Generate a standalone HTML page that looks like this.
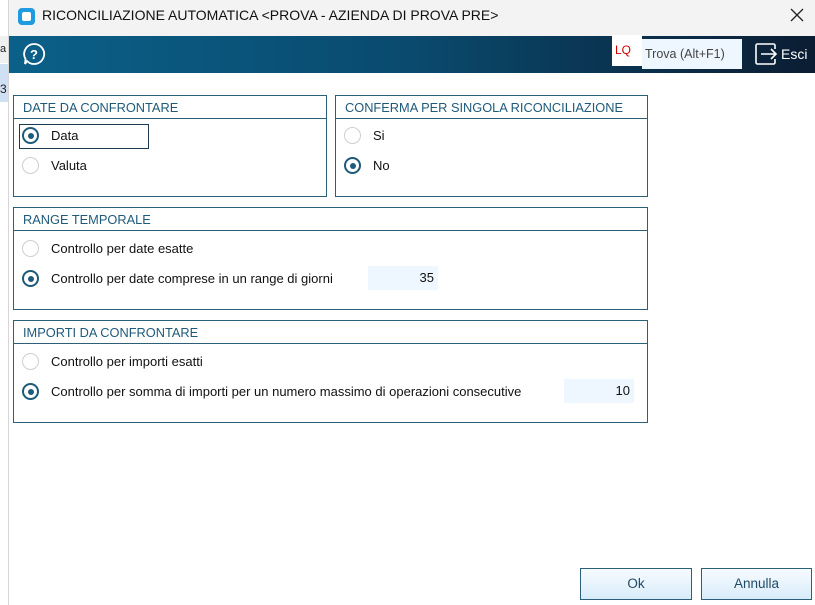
<!DOCTYPE html>
<html><head><meta charset="utf-8"><style>
*{box-sizing:border-box;margin:0;padding:0}
body{width:815px;height:605px;overflow:hidden;background:#fff;font-family:"Liberation Sans",sans-serif;font-size:12px;color:#222;position:relative}
.abs{position:absolute}
.box{position:absolute;border:1px solid #2c5f78}
.box .t{height:23px;border-bottom:1px solid #2c5f78;color:#1e5a7a;font-size:12.8px;line-height:23px;padding-left:9px}
.r{position:absolute;width:17px;height:17px;border-radius:50%;border:1.5px solid #cfcfcf;background:#fff}
.r.on{border:2px solid #1e5a7a}
.r.on:after{content:"";position:absolute;left:3.5px;top:3.5px;width:6px;height:6px;border-radius:50%;background:#1e5a7a}
.lb{position:absolute;font-size:13px;color:#111}
.in{position:absolute;background:#eef7ff;text-align:right;padding-right:4px;line-height:24px;font-size:13px;color:#111}
.btn{position:absolute;border:1px solid #2c5f78;background:linear-gradient(#f6fbff,#d9ecfa);text-align:center;line-height:30px;color:#1e4a66;font-size:13.5px}
</style></head><body>
<div class="abs" style="left:0;top:36px;width:8px;height:27px;background:#f0f0f0;font-size:11px;line-height:27px">a</div>
<div class="abs" style="left:0;top:64px;width:8px;height:38px;background:#cfe0f5;font-size:12px;line-height:50px">3</div>
<div class="abs" style="left:8px;top:0;width:807px;height:605px;border-left:1px solid #d6d6d6;background:#fff"></div>
<div class="abs" style="left:9px;top:0;width:806px;height:36px;background:#f3f3f3"></div>
<div class="abs" style="left:18px;top:8px;width:17px;height:17px;border-radius:4px;background:#1f9be0"><div style="position:absolute;left:4px;top:4px;width:9px;height:9px;border-radius:2px;background:#fff"></div></div>
<div class="abs" style="left:42px;top:7px;font-size:14px;color:#111">RICONCILIAZIONE AUTOMATICA &lt;PROVA - AZIENDA DI PROVA PRE&gt;</div>
<svg class="abs" style="left:790px;top:8px" width="14" height="14"><path d="M1 1L13 13M13 1L1 13" stroke="#222" stroke-width="1.3"/></svg>
<div class="abs" style="left:9px;top:36px;width:806px;height:37px;background:linear-gradient(90deg,#0b6089,#0a4a6e 50%,#0b1d32)"></div>
<svg class="abs" style="left:22px;top:42px" width="24" height="24"><path d="M12 2a10 10 0 1 1-7 17L3 22 3.5 17A10 10 0 0 1 12 2z" fill="none" stroke="#fff" stroke-width="1.8"/><text x="12" y="17" text-anchor="middle" fill="#fff" font-size="13" font-weight="bold" font-family="Liberation Sans">?</text></svg>
<div class="abs" style="left:612px;top:35px;width:30px;height:31px;background:#fff;color:#c00;font-size:12px;line-height:31px;padding-left:3px">LQ</div>
<div class="abs" style="left:642px;top:39px;width:100px;height:30px;background:#eef7ff;color:#444;font-size:12.5px;line-height:30px;padding-left:3px">Trova (Alt+F1)</div>
<svg class="abs" style="left:754px;top:42px" width="24" height="24"><path d="M9 2H3.5A1.5 1.5 0 0 0 2 3.5v17A1.5 1.5 0 0 0 3.5 22H9M9 2h10.5A1.5 1.5 0 0 1 21 3.5V7M21 17v3.5a1.5 1.5 0 0 1-1.5 1.5H9M7 12h15M17 7l5 5-5 5" fill="none" stroke="#fff" stroke-width="1.6"/></svg>
<div class="abs" style="left:781px;top:46px;color:#fff;font-size:14px">Esci</div>

<div class="box" style="left:13px;top:95px;width:314px;height:102px"><div class="t">DATE DA CONFRONTARE</div></div>
<div class="abs" style="left:19px;top:124px;width:130px;height:25px;border:1.5px solid #1e3a4e"></div>
<div class="r on" style="left:22px;top:127px"></div><div class="lb" style="left:51px;top:128px">Data</div>
<div class="r" style="left:22px;top:157px"></div><div class="lb" style="left:51px;top:158px">Valuta</div>

<div class="box" style="left:335px;top:95px;width:313px;height:102px"><div class="t">CONFERMA PER SINGOLA RICONCILIAZIONE</div></div>
<div class="r" style="left:344px;top:127px"></div><div class="lb" style="left:373px;top:128px">Si</div>
<div class="r on" style="left:344px;top:157px"></div><div class="lb" style="left:373px;top:158px">No</div>

<div class="box" style="left:13px;top:207px;width:635px;height:103px"><div class="t">RANGE TEMPORALE</div></div>
<div class="r" style="left:22px;top:240px"></div><div class="lb" style="left:51px;top:241px">Controllo per date esatte</div>
<div class="r on" style="left:22px;top:270px"></div><div class="lb" style="left:51px;top:271px">Controllo per date comprese in un range di giorni</div>
<div class="in" style="left:368px;top:266px;width:70px;height:24px">35</div>

<div class="box" style="left:13px;top:320px;width:635px;height:103px"><div class="t">IMPORTI DA CONFRONTARE</div></div>
<div class="r" style="left:22px;top:353px"></div><div class="lb" style="left:51px;top:354px">Controllo per importi esatti</div>
<div class="r on" style="left:22px;top:383px"></div><div class="lb" style="left:51px;top:384px">Controllo per somma di importi per un numero massimo di operazioni consecutive</div>
<div class="in" style="left:564px;top:379px;width:70px;height:24px">10</div>

<div class="btn" style="left:580px;top:568px;width:112px;height:32px">Ok</div>
<div class="btn" style="left:701px;top:568px;width:111px;height:32px">Annulla</div>
</body></html>
